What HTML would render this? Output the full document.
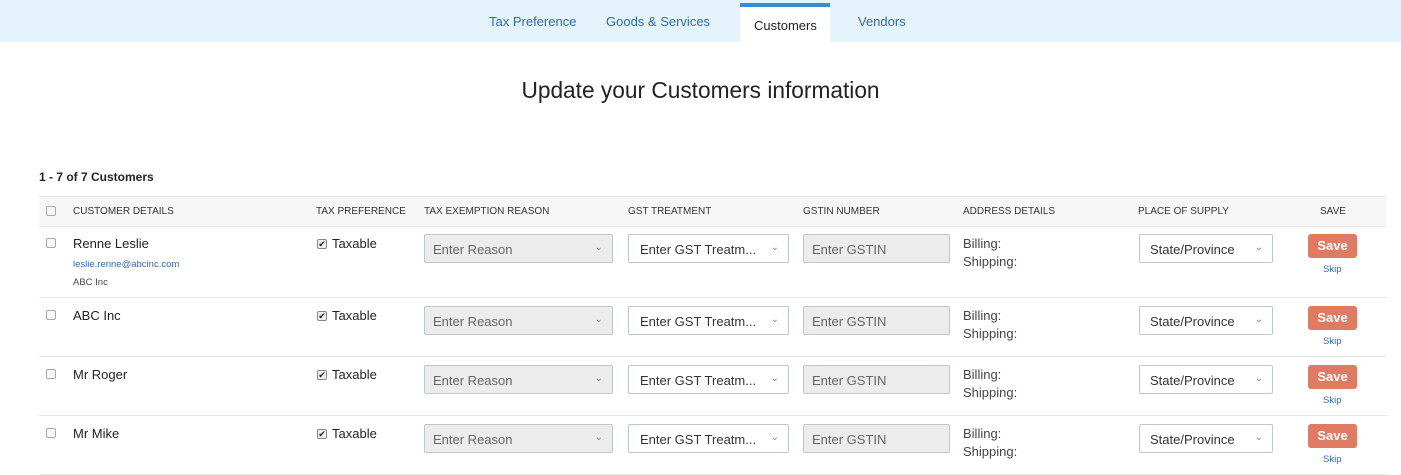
<!DOCTYPE html><html><head><style>
*{box-sizing:border-box;margin:0;padding:0}
body{width:1401px;height:475px;overflow:hidden;background:#fff;font-family:"Liberation Sans",sans-serif;color:#222;position:relative}
.a{position:absolute}
.nav{left:0;top:0;width:1401px;height:42px;background:#e5f3fc}
.tab{top:14px;font-size:13px;color:#2d6bb5}
.hdr{left:39px;top:196px;width:1347px;height:31px;background:#f7f7f7;border-top:1px solid #e6e6e6;border-bottom:1px solid #e6e6e6}
.h{top:10px;font-size:10px;color:#333}
.row{left:39px;width:1347px;border-bottom:1px solid #e6e6e6}
.cb{width:10px;height:10px;border:1px solid #aaa;border-radius:2px;background:#fafafa}
.inp{height:29px;border:1px solid #bcc6d2;border-radius:2px;font-size:13px;color:#666;padding:7px 8px}
.g{background:#ececec}
.chev{position:absolute;right:9px;top:7px;font-size:10px;color:#888}
.btn{width:49px;height:24px;background:#e07b63;color:#fff;border-radius:3px;font-size:13px;font-weight:bold;text-align:center;line-height:24px}
.t{font-size:13px}
</style></head><body>
<div class="a nav"></div>
<div class="a tab" style="left:489px">Tax Preference</div>
<div class="a tab" style="left:606px">Goods &amp; Services</div>
<div class="a" style="left:740px;top:3px;width:90px;height:39px;background:#fff;border-top:4px solid #3b8ad9"></div>
<div class="a tab" style="left:754px;top:18px;color:#222">Customers</div>
<div class="a tab" style="left:858px">Vendors</div>
<div class="a" style="left:0;width:1401px;top:77px;text-align:center;font-size:22.7px;color:#222">Update your Customers information</div>
<div class="a" style="left:39px;top:170px;font-size:12px;font-weight:bold">1 - 7 of 7 Customers</div>
<div class="a hdr"></div>
<div class="a cb" style="left:46px;top:206px"></div>
<div class="a h" style="left:73px;top:206px">CUSTOMER DETAILS</div>
<div class="a h" style="left:316px;top:206px">TAX PREFERENCE</div>
<div class="a h" style="left:424px;top:206px">TAX EXEMPTION REASON</div>
<div class="a h" style="left:628px;top:206px">GST TREATMENT</div>
<div class="a h" style="left:803px;top:206px">GSTIN NUMBER</div>
<div class="a h" style="left:963px;top:206px">ADDRESS DETAILS</div>
<div class="a h" style="left:1138px;top:206px">PLACE OF SUPPLY</div>
<div class="a h" style="left:1320px;top:206px">SAVE</div>
<div id="rows"></div>
<script>
var rows=[["Renne Leslie",226,72,1],["ABC Inc",298,59],["Mr Roger",357,59],["Mr Mike",416,59]];
var h="";
rows.forEach(function(r){var y=r[1];
h+='<div class="a row" style="top:'+y+'px;height:'+r[2]+'px"></div>';
h+='<div class="a cb" style="left:46px;top:'+(y+12)+'px"></div>';
h+='<div class="a t" style="left:73px;top:'+(y+10)+'px">'+r[0]+'</div>';
if(r[3]){h+='<div class="a" style="left:73px;top:'+(y+33)+'px;font-size:9.5px;color:#2d6bb5">leslie.renne@abcinc.com</div><div class="a" style="left:73px;top:'+(y+51)+'px;font-size:9.5px;color:#444">ABC Inc</div>';}
h+='<div class="a" style="left:317px;top:'+(y+13)+'px;width:10px;height:10px;border:1px solid #888;border-radius:2px;background:#eee;font-size:9px;line-height:8px;text-align:center">&#10004;</div>';
h+='<div class="a t" style="left:332px;top:'+(y+10)+'px">Taxable</div>';
h+='<div class="a inp g" style="left:424px;top:'+(y+8)+'px;width:189px">Enter Reason<span class="chev">&#8964;</span></div>';
h+='<div class="a inp" style="left:628px;top:'+(y+8)+'px;width:161px;color:#333;padding-left:11px">Enter GST Treatm...<span class="chev">&#8964;</span></div>';
h+='<div class="a inp g" style="left:803px;top:'+(y+8)+'px;width:147px">Enter GSTIN</div>';
h+='<div class="a t" style="left:963px;top:'+(y+9)+'px;color:#444;line-height:18px">Billing:<br>Shipping:</div>';
h+='<div class="a inp" style="left:1139px;top:'+(y+8)+'px;width:134px;color:#333;padding-left:10px">State/Province<span class="chev">&#8964;</span></div>';
h+='<div class="a btn" style="left:1308px;top:'+(y+8)+'px">Save</div>';
h+='<div class="a" style="left:1323px;top:'+(y+38)+'px;font-size:9.5px;color:#2d6bb5">Skip</div>';
});
document.getElementById("rows").innerHTML=h;
</script>
</body></html>
